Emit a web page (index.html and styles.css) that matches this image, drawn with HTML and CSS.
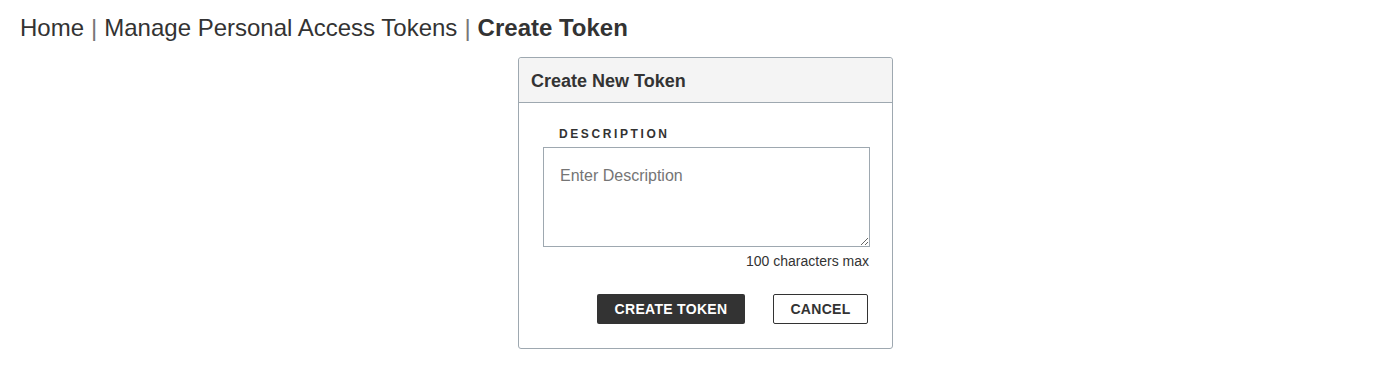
FILE: index.html
```html
<!DOCTYPE html>
<html lang="en">
<head>
    <meta charset="UTF-8">
    <meta name="viewport" content="width=device-width, initial-scale=1.0">
    <title>Create Token</title>
    <link rel="stylesheet" href="styles.css">
</head>
<body>
    <nav class="breadcrumb">
        <a href="#">Home</a>
        <span class="sep">|</span>
        <a href="#">Manage Personal Access Tokens</a>
        <span class="sep">|</span>
        <strong>Create Token</strong>
    </nav>
    <div class="card">
        <div class="card-header">Create New Token</div>
        <div class="card-body">
            <label for="description">Description</label>
            <textarea id="description" maxlength="100" placeholder="Enter Description"></textarea>
            <div class="hint">100 characters max</div>
            <div class="actions">
                <button class="button primary">Create Token</button>
                <button class="button secondary">Cancel</button>
            </div>
        </div>
    </div>
</body>
</html>
```

FILE: styles.css
```css
body {
    font-family: "Liberation Sans", Arial, sans-serif;
    margin: 0;
    padding: 0;
    color: #333;
    background: #fff;
}
.breadcrumb {
    padding: 13px 20px 0;
    font-size: 24px;
    line-height: 30px;
    display: flex;
    gap: 7px;
}
.breadcrumb a {
    color: #333;
    text-decoration: none;
}
.breadcrumb .sep {
    color: #777;
}
.card {
    margin: 14px 0 0 518px;
    width: 373px;
    border: 1px solid #9ea8b0;
    border-radius: 3px;
}
.card-header {
    background: #f4f4f4;
    border-bottom: 1px solid #9ea8b0;
    border-radius: 3px 3px 0 0;
    padding: 12px 12px 0;
    height: 32px;
    font-size: 18px;
    line-height: 23px;
    font-weight: bold;
}
.card-body {
    padding: 24px 22px 24px 24px;
    display: flex;
    flex-direction: column;
}
.card-body label {
    font-size: 12px;
    font-weight: bold;
    letter-spacing: 2.6px;
    text-transform: uppercase;
    margin-left: 16px;
    line-height: 14px;
}
.card-body textarea {
    margin-top: 6px;
    height: 100px;
    box-sizing: border-box;
    border: 1px solid #9ea8b0;
    padding: 19px 16px;
    font-family: inherit;
    font-size: 16px;
    color: #333;
}
.card-body textarea::placeholder {
    color: #757575;
}
.hint {
    text-align: right;
    font-size: 14px;
    margin-top: 6px;
    padding-right: 1px;
}
.actions {
    display: flex;
    justify-content: flex-end;
    gap: 28px;
    margin-top: 25px;
}
.button {
    font-family: inherit;
    font-size: 14px;
    font-weight: bold;
    text-transform: uppercase;
    letter-spacing: 0.3px;
    height: 30px;
    padding: 0 12px;
    border-radius: 2px;
    cursor: pointer;
}
.button.primary {
    background: #333;
    color: #fff;
    border: none;
    width: 148px;
}
.button.secondary {
    background: #fff;
    color: #333;
    border: 1px solid #333;
    width: 95px;
    margin-right: 2px;
}
```
